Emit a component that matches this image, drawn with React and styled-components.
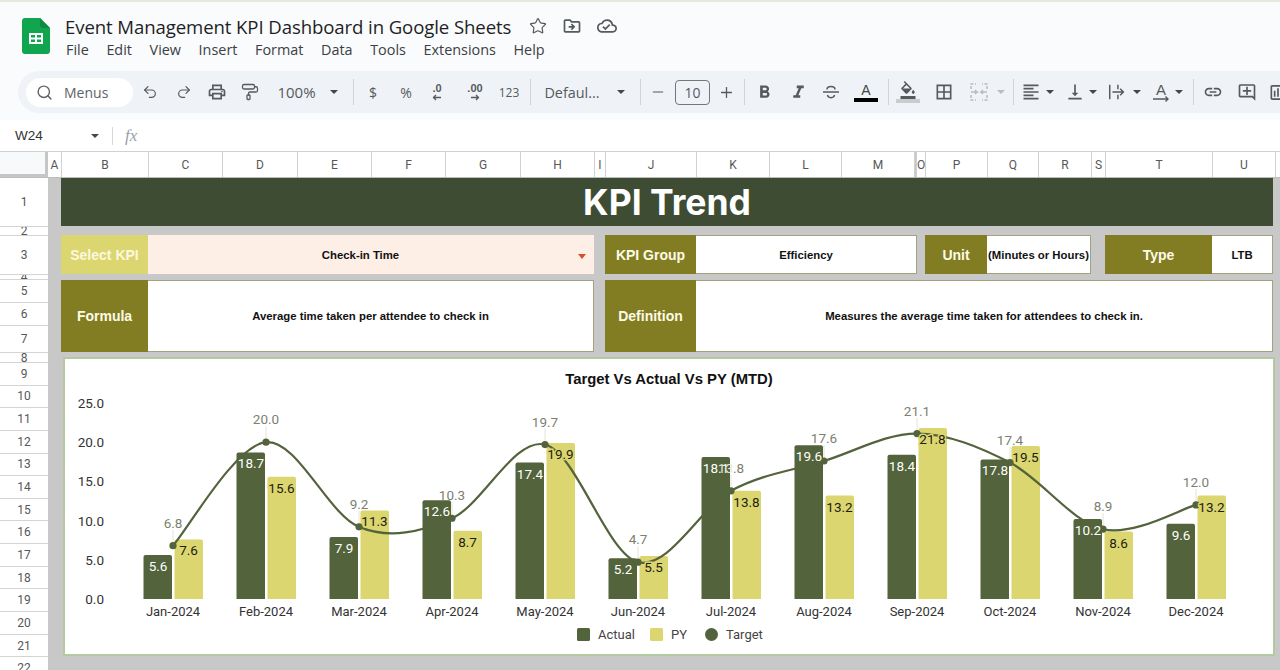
import React from 'react';
import styled, { createGlobalStyle } from 'styled-components';
import { Search, Undo2, Redo2, PaintRoller, Star, Minus, Plus } from 'lucide-react';
import {
  MdOutlineDriveFileMove,
  MdOutlineCloudDone,
  MdOutlineLocalPrintshop,
  MdOutlineAddComment,
  MdOutlineInsertChart,
  MdBorderAll,
  MdFormatAlignLeft,
  MdVerticalAlignBottom,
  MdFormatColorFill,
  MdFormatBold,
  MdFormatItalic,
  MdLink,
} from 'react-icons/md';

const MENU = ['File', 'Edit', 'View', 'Insert', 'Format', 'Data', 'Tools', 'Extensions', 'Help'];

const COLUMNS = [
  ['B', 87], ['C', 74], ['D', 75], ['E', 74], ['F', 74], ['G', 75], ['H', 74], ['I', 11],
  ['J', 91], ['K', 73], ['L', 72], ['M', 73], ['', 2], ['O', 9], ['P', 62], ['Q', 51],
  ['R', 53], ['S', 14], ['T', 107], ['U', 63],
];

const ROWS = [49, 9, 39, 5, 23, 23, 27, 10, ...Array(14).fill(22.65)];

const MONTHS = [
  { label: 'Jan-2024', actual: 5.6, py: 7.6, target: 6.8 },
  { label: 'Feb-2024', actual: 18.7, py: 15.6, target: 20.0 },
  { label: 'Mar-2024', actual: 7.9, py: 11.3, target: 9.2 },
  { label: 'Apr-2024', actual: 12.6, py: 8.7, target: 10.3 },
  { label: 'May-2024', actual: 17.4, py: 19.9, target: 19.7 },
  { label: 'Jun-2024', actual: 5.2, py: 5.5, target: 4.7 },
  { label: 'Jul-2024', actual: 18.1, py: 13.8, target: 13.8 },
  { label: 'Aug-2024', actual: 19.6, py: 13.2, target: 17.6 },
  { label: 'Sep-2024', actual: 18.4, py: 21.8, target: 21.1 },
  { label: 'Oct-2024', actual: 17.8, py: 19.5, target: 17.4 },
  { label: 'Nov-2024', actual: 10.2, py: 8.6, target: 8.9 },
  { label: 'Dec-2024', actual: 9.6, py: 13.2, target: 12.0 },
];

const DARK = '#53633b';
const LIGHT = '#dbd670';
const BASE_Y = 599;
const UNIT = 7.84;
const toY = (v) => BASE_Y - v * UNIT;
const toX = (i) => 173 + i * 93;

const GlobalStyle = createGlobalStyle`
  html, body {
    margin: 0;
    padding: 0;
    background: #fff;
    font-family: "Liberation Sans", Arial, sans-serif;
  }
`;

const Page = styled.div`
  width: 1280px;
  height: 670px;
  overflow: hidden;
  display: flex;
  flex-direction: column;
  border-top: 2px solid #e4e8de;
  box-sizing: border-box;
`;

const Header = styled.header`
  height: 118px;
  flex: none;
  background: #f9fbfd;
`;

const TitleRow = styled.div`
  height: 69px;
  display: flex;
  align-items: flex-start;
  padding-left: 22px;
`;

const LogoWrap = styled.div`
  margin-top: 16px;
  width: 28px;
  height: 36px;
`;

const TitleColumn = styled.div`
  margin-left: 15px;
  padding-top: 11px;
`;

const TitleLine = styled.div`
  display: flex;
  align-items: center;
  height: 26px;
`;

const DocTitle = styled.div`
  font-family: "Open Sans", sans-serif;
  font-size: 18.6px;
  color: #1f1f1f;
  letter-spacing: -0.1px;
  white-space: nowrap;
`;

const TitleIcons = styled.div`
  margin-left: 18px;
  display: flex;
  align-items: center;
  gap: 15px;
  color: #565a5c;
`;

const MenuBar = styled.nav`
  display: flex;
  gap: 17.6px;
  height: 20px;
  margin-left: 1px;
  align-items: center;
  font-family: "Open Sans", sans-serif;
  font-size: 14.4px;
  color: #3c4043;
`;

const Toolbar = styled.div`
  margin-left: 18px;
  height: 42px;
  display: flex;
  align-items: center;
  background: #eff3f8;
  border-radius: 21px 0 0 21px;
  padding-left: 8px;
  overflow: hidden;
  color: #565a5c;
`;

const MenuSearch = styled.div`
  width: 107px;
  height: 29px;
  flex: none;
  box-sizing: border-box;
  padding-left: 10px;
  display: flex;
  align-items: center;
  gap: 11px;
  background: #fff;
  border-radius: 15px;
  font-family: "Open Sans", sans-serif;
  font-size: 14px;
  color: #5f6368;
`;

const Slot = styled.div`
  width: ${(p) => p.$w}px;
  margin-left: ${(p) => p.$ml || 0}px;
  flex: none;
  display: flex;
  align-items: center;
  justify-content: center;
  font-family: ${(p) => (p.$sans ? '"Open Sans", sans-serif' : 'inherit')};
  font-size: ${(p) => p.$fs || 14}px;
  color: #565a5c;
  white-space: nowrap;
`;

const Caret = styled.div`
  width: 0;
  height: 0;
  flex: none;
  margin-left: ${(p) => p.$ml || 0}px;
  border-left: 4px solid transparent;
  border-right: 4px solid transparent;
  border-top: 4px solid ${(p) => p.$color || '#444746'};
`;

const Divider = styled.div`
  width: 1px;
  height: 26px;
  flex: none;
  margin-left: ${(p) => p.$ml || 0}px;
  background: #cfd3d8;
`;

const SizeBox = styled.div`
  width: 35px;
  height: 25px;
  flex: none;
  box-sizing: border-box;
  display: flex;
  align-items: center;
  justify-content: center;
  border: 1px solid #747775;
  border-radius: 4px;
  font-family: "Open Sans", sans-serif;
  font-size: 14px;
`;

const DecimalIcon = styled.div`
  display: flex;
  flex-direction: column;
  align-items: center;
  font-size: 11px;
  font-weight: 700;
  line-height: 11px;
  color: #565a5c;
`;

const ColorA = styled.div`
  width: 24px;
  display: flex;
  flex-direction: column;
  align-items: center;
  font-size: 14px;
  line-height: 15px;
  color: #444;
`;

const ColorBar = styled.div`
  width: 100%;
  height: ${(p) => p.$h || 4}px;
  background: ${(p) => p.$color};
`;

const FillIcon = styled.div`
  width: 24px;
  display: flex;
  flex-direction: column;
  align-items: center;
`;

const FormulaBar = styled.div`
  height: 32px;
  flex: none;
  display: flex;
  align-items: center;
  background: #fff;
  border-bottom: 1px solid #d0d0d0;
  box-sizing: border-box;
`;

const CellRef = styled.div`
  width: 76px;
  padding-left: 15px;
  font-size: 13.5px;
  color: #333;
`;

const FxDivider = styled.div`
  width: 1px;
  height: 18px;
  margin-left: 13px;
  background: #d8d8d8;
`;

const FxLabel = styled.div`
  margin-left: 12px;
  font-family: "Liberation Serif", serif;
  font-style: italic;
  font-size: 17px;
  color: #9aa0a6;
`;

const ColumnHeader = styled.div`
  height: 26px;
  flex: none;
  display: flex;
  background: #fff;
  border-bottom: 1px solid #bdbdbd;
  box-sizing: border-box;
`;

const CornerCell = styled.div`
  width: 45px;
  flex: none;
  background: #f8f9fa;
  border-right: 3px solid #c4c7c5;
  border-bottom: 3px solid #c4c7c5;
  box-sizing: content-box;
  height: 22px;
`;

const ColumnCell = styled.div`
  width: ${(p) => p.$w}px;
  flex: none;
  box-sizing: border-box;
  display: flex;
  align-items: center;
  justify-content: center;
  border-right: 1px solid #d0d0d0;
  font-family: Roboto, sans-serif;
  font-size: 12px;
  color: #575757;
  overflow: hidden;
  background: ${(p) => (p.$hidden ? '#c8c8c8' : '#fff')};
`;

const Body = styled.div`
  flex: 1;
  display: flex;
  min-height: 0;
`;

const RowHeader = styled.div`
  width: 48px;
  flex: none;
  background: #fff;
  display: flex;
  flex-direction: column;
`;

const RowCell = styled.div`
  height: ${(p) => p.$h}px;
  flex: none;
  box-sizing: border-box;
  display: flex;
  align-items: center;
  justify-content: center;
  overflow: hidden;
  border-bottom: 1px solid #d4d4d4;
  font-family: Roboto, sans-serif;
  font-size: 12px;
  color: #575757;
`;

const Sheet = styled.div`
  flex: 1;
  background: #c8c8c8;
  padding-left: 13px;
  display: grid;
  grid-template-columns: 87px 446px 11px 91px 221px 8px 62px 104px 14px 107px 61px;
  grid-template-rows: 48px 9px 39px 6px 72px 5px 299px;
  align-content: start;
  justify-content: start;
`;

const Banner = styled.div`
  grid-column: 1 / -1;
  grid-row: 1;
  display: flex;
  align-items: center;
  justify-content: center;
  background: #3d4c33;
  color: #fff;
  font-family: Inter, sans-serif;
  font-weight: 700;
  font-size: 35.5px;
`;

const LabelCell = styled.div`
  grid-column: ${(p) => p.$col};
  grid-row: ${(p) => p.$row};
  display: flex;
  align-items: center;
  justify-content: center;
  background: ${(p) => (p.$light ? LIGHT : '#827d23')};
  color: ${(p) => (p.$light ? '#fbf8df' : '#fdfbe6')};
  font-size: 14px;
  font-weight: 700;
`;

const ValueCell = styled.div`
  grid-column: ${(p) => p.$col};
  grid-row: ${(p) => p.$row};
  position: relative;
  display: flex;
  align-items: center;
  justify-content: center;
  box-sizing: border-box;
  padding-right: ${(p) => p.$pr || 0}px;
  background: ${(p) => p.$bg || '#fff'};
  border: 1px solid ${(p) => p.$bg || '#a3a27c'};
  border-left: none;
  color: #111;
  font-size: 11.35px;
  font-weight: 700;
  white-space: nowrap;
`;

const DropCaret = styled.div`
  position: absolute;
  right: 7px;
  top: 18px;
  width: 0;
  height: 0;
  border-left: 4px solid transparent;
  border-right: 4px solid transparent;
  border-top: 5px solid #d4502a;
`;

const ChartCard = styled.div`
  grid-column: 1 / -1;
  grid-row: 7;
  margin: 0 -2px 0 2px;
  background: #fff;
  border: 2px solid #b5c9a0;
  box-sizing: border-box;
  overflow: hidden;
`;

const ChartSvg = styled.svg`
  display: block;
  width: 100%;
  height: 100%;
  font-family: Roboto, sans-serif;
`;

const SheetsLogo = () => (
  <svg width="28" height="36" viewBox="0 0 28 36">
    <path d="M3 0h15l10 10v23a3 3 0 0 1-3 3H3a3 3 0 0 1-3-3V3a3 3 0 0 1 3-3z" fill="#11a54f" />
    <path d="M18 0l10 10h-7a3 3 0 0 1-3-3z" fill="#0c8a41" />
    <path d="M7 15h14v11H7z M9 17v2.5h4V17z M15 17v2.5h4V17z M9 21.5V24h4v-2.5z M15 21.5V24h4v-2.5z" fill="#fff" fillRule="evenodd" />
  </svg>
);

const StrikeIcon = () => (
  <svg width="20" height="20" viewBox="0 0 20 20" fill="none" stroke="#565a5c" strokeWidth="1.5">
    <path d="M2 10h16" />
    <path d="M6 7.5C6 3.5 14 3.5 14 7.5" />
    <path d="M6.5 13c.5 3.5 6.5 3.5 7 0" />
  </svg>
);

const MergeIcon = () => (
  <svg width="22" height="22" viewBox="0 0 22 22" fill="none" stroke="#b9bcbf" strokeWidth="1.5">
    <path d="M3 8V3h5M19 8V3h-5M3 14v5h5M19 14v5h-5" strokeDasharray="3 1.5" />
    <path d="M3 11h6l-2-2M9 11l-2 2M19 11h-6l2-2M13 11l2 2" />
  </svg>
);

const WrapIcon = () => (
  <svg width="22" height="20" viewBox="0 0 22 20" fill="none" stroke="#565a5c" strokeWidth="1.6">
    <path d="M3 2v16" />
    <path d="M12 2v5M12 13v5" />
    <path d="M6 10h12M14.5 6.5L18 10l-3.5 3.5" />
  </svg>
);

const RotateIcon = () => (
  <svg width="20" height="22" viewBox="0 0 20 22" fill="#565a5c">
    <text x="10" y="14" fontSize="15" textAnchor="middle" fontFamily="Liberation Sans, sans-serif">A</text>
    <path d="M2 18h15M14.5 15.5L17 18l-2.5 2.5" fill="none" stroke="#565a5c" strokeWidth="1.4" />
  </svg>
);

const SmallArrow = ({ left }) => (
  <svg width="10" height="7" viewBox="0 0 10 7" fill="none" stroke="#565a5c" strokeWidth="1.3">
    {left ? <path d="M9 3.5H1.5M4 1L1.5 3.5 4 6" /> : <path d="M1 3.5h7.5M6 1l2.5 2.5L6 6" />}
  </svg>
);

// catmull-rom through the target points, written out as cubic beziers
const buildCurve = (points) => {
  let d = `M${points[0][0]} ${points[0][1]}`;
  for (let i = 0; i < points.length - 1; i += 1) {
    const p0 = points[i - 1] || points[i];
    const p1 = points[i];
    const p2 = points[i + 1];
    const p3 = points[i + 2] || p2;
    const c1 = [p1[0] + (p2[0] - p0[0]) / 6, p1[1] + (p2[1] - p0[1]) / 6];
    const c2 = [p2[0] - (p3[0] - p1[0]) / 6, p2[1] - (p3[1] - p1[1]) / 6];
    d += `C${c1[0]} ${c1[1]} ${c2[0]} ${c2[1]} ${p2[0]} ${p2[1]}`;
  }
  return d;
};

const Bar = ({ x, value, fill }) => {
  const top = toY(value);
  return <path d={`M${x} ${BASE_Y}V${top + 2}q0-2 2-2h24.5q2 0 2 2V${BASE_Y}z`} fill={fill} />;
};

const Chart = () => {
  const points = MONTHS.map((m, i) => [toX(i), toY(m.target)]);
  return (
    <ChartSvg viewBox="65 359 1208 295">
      <text x="669" y="384" textAnchor="middle" fontFamily="Liberation Sans, sans-serif" fontWeight="700" fontSize="14.85" fill="#111">
        Target Vs Actual Vs PY (MTD)
      </text>

      {[0, 5, 10, 15, 20, 25].map((v) => (
        <text key={v} x="104" y={toY(v) + 5} textAnchor="end" fontSize="13.5" fill="#333">
          {v.toFixed(1)}
        </text>
      ))}

      {MONTHS.map((m, i) => (
        <g key={m.label}>
          <Bar x={toX(i) - 29.5} value={m.actual} fill={DARK} />
          <Bar x={toX(i) + 1.5} value={m.py} fill={LIGHT} />
          <text x={toX(i)} y="616" textAnchor="middle" fontSize="13" fill="#333">
            {m.label}
          </text>
        </g>
      ))}

      {points.map(([x, y]) => (
        <path key={x} d={`M${x} ${y - 16}V${y}`} stroke="#e2e2dc" strokeWidth="1" />
      ))}
      <path d={buildCurve(points)} fill="none" stroke={DARK} strokeWidth="2.2" />
      {points.map(([x, y]) => (
        <circle key={x} cx={x} cy={y} r="3.6" fill={DARK} />
      ))}

      {MONTHS.map((m, i) => (
        <g key={m.label} fontSize="13.5">
          <text x={toX(i) - 15} y={toY(m.actual) + 16} textAnchor="middle" fill="#fff">
            {m.actual.toFixed(1)}
          </text>
          <text
            x={toX(i) + 15.5}
            y={toY(m.py) + 16}
            textAnchor="middle"
            fill="#1d1d10"
            stroke={LIGHT}
            strokeWidth="3"
            style={{ paintOrder: 'stroke' }}
          >
            {m.py.toFixed(1)}
          </text>
          <text x={toX(i)} y={toY(m.target) - 18} textAnchor="middle" fill="#7d7f70">
            {m.label === 'Jul-2024' ? <tspan fill="#e4e7dc">13</tspan> : null}
            {m.label === 'Jul-2024' ? '.8' : m.target.toFixed(1)}
          </text>
        </g>
      ))}

      <rect x="577" y="628" width="13" height="13" rx="1.5" fill={DARK} />
      <text x="598" y="639" fontSize="13" fill="#444">Actual</text>
      <rect x="650" y="628" width="13" height="13" rx="1.5" fill={LIGHT} />
      <text x="671" y="639" fontSize="13" fill="#444">PY</text>
      <circle cx="711.5" cy="634.5" r="6.5" fill={DARK} />
      <text x="726" y="639" fontSize="13" fill="#444">Target</text>
    </ChartSvg>
  );
};

const App = () => (
  <Page>
    <GlobalStyle />
    <Header>
      <TitleRow>
        <LogoWrap>
          <SheetsLogo />
        </LogoWrap>
        <TitleColumn>
          <TitleLine>
            <DocTitle>Event Management KPI Dashboard in Google Sheets</DocTitle>
            <TitleIcons>
              <Star size={18} strokeWidth={1.6} />
              <MdOutlineDriveFileMove size={20} />
              <MdOutlineCloudDone size={20} />
            </TitleIcons>
          </TitleLine>
          <MenuBar>
            {MENU.map((item) => (
              <span key={item}>{item}</span>
            ))}
          </MenuBar>
        </TitleColumn>
      </TitleRow>
      <Toolbar>
        <MenuSearch>
          <Search size={17} strokeWidth={2} />
          Menus
        </MenuSearch>
        <Slot $w={34}><Undo2 size={16} strokeWidth={1.8} /></Slot>
        <Slot $w={33}><Redo2 size={16} strokeWidth={1.8} /></Slot>
        <Slot $w={34}><MdOutlineLocalPrintshop size={20} /></Slot>
        <Slot $w={32}><PaintRoller size={18} strokeWidth={1.7} /></Slot>
        <Slot $w={61} $sans $fs={15}>100%</Slot>
        <Slot $w={14}><Caret /></Slot>
        <Divider $ml={12} />
        <Slot $w={38} $fs={14} $sans>$</Slot>
        <Slot $w={28} $fs={14} $sans>%</Slot>
        <Slot $w={34}>
          <DecimalIcon>.0<SmallArrow left /></DecimalIcon>
        </Slot>
        <Slot $w={42}>
          <DecimalIcon>.00<SmallArrow /></DecimalIcon>
        </Slot>
        <Slot $w={26} $fs={12} $sans>123</Slot>
        <Divider $ml={8} />
        <Slot $w={82} $fs={14.4} $sans>Defaul...</Slot>
        <Slot $w={16}><Caret /></Slot>
        <Divider $ml={11} />
        <Slot $w={34}><Minus size={16} strokeWidth={1.8} /></Slot>
        <SizeBox>10</SizeBox>
        <Slot $w={32}><Plus size={17} strokeWidth={1.8} /></Slot>
        <Divider $ml={2} />
        <Slot $w={38}><MdFormatBold size={21} /></Slot>
        <Slot $w={30}><MdFormatItalic size={21} /></Slot>
        <Slot $w={36}><StrikeIcon /></Slot>
        <Slot $w={34}>
          <ColorA>A<ColorBar $color="#000" /></ColorA>
        </Slot>
        <Divider $ml={5} />
        <Slot $w={38}>
          <FillIcon>
            <MdFormatColorFill size={18} />
            <ColorBar $color="#c9cbcd" />
          </FillIcon>
        </Slot>
        <Slot $w={34}><MdBorderAll size={20} /></Slot>
        <Slot $w={36}><MergeIcon /></Slot>
        <Caret $color="#b9bcbf" />
        <Divider $ml={8} />
        <Slot $w={20} $ml={7}><MdFormatAlignLeft size={22} /></Slot>
        <Caret $ml={5} />
        <Slot $w={20} $ml={11}><MdVerticalAlignBottom size={22} /></Slot>
        <Caret $ml={4} />
        <Slot $w={20} $ml={10}><WrapIcon /></Slot>
        <Caret $ml={6} />
        <Slot $w={20} $ml={10}><RotateIcon /></Slot>
        <Caret $ml={4} />
        <Divider $ml={10} />
        <Slot $w={20} $ml={9}><MdLink size={22} /></Slot>
        <Slot $w={20} $ml={14}><MdOutlineAddComment size={21} /></Slot>
        <Slot $w={20} $ml={11}><MdOutlineInsertChart size={21} /></Slot>
      </Toolbar>
    </Header>

    <FormulaBar>
      <CellRef>W24</CellRef>
      <Caret />
      <FxDivider />
      <FxLabel>fx</FxLabel>
    </FormulaBar>

    <ColumnHeader>
      <CornerCell />
      <ColumnCell $w={14}>A</ColumnCell>
      {COLUMNS.map(([name, w]) => (
        <ColumnCell key={name || 'hidden'} $w={w} $hidden={!name}>{name}</ColumnCell>
      ))}
    </ColumnHeader>

    <Body>
      <RowHeader>
        {ROWS.map((h, i) => (
          <RowCell key={i} $h={h}>{i + 1}</RowCell>
        ))}
      </RowHeader>
      <Sheet>
        <Banner>KPI Trend</Banner>

        <LabelCell $col="1" $row="3" $light>Select KPI</LabelCell>
        <ValueCell $col="2" $row="3" $bg="#fdefe6" $pr={20}>
          Check-in Time
          <DropCaret />
        </ValueCell>
        <LabelCell $col="4" $row="3">KPI Group</LabelCell>
        <ValueCell $col="5" $row="3">Efficiency</ValueCell>
        <LabelCell $col="7" $row="3">Unit</LabelCell>
        <ValueCell $col="8" $row="3">(Minutes or Hours)</ValueCell>
        <LabelCell $col="10" $row="3">Type</LabelCell>
        <ValueCell $col="11" $row="3">LTB</ValueCell>

        <LabelCell $col="1" $row="5">Formula</LabelCell>
        <ValueCell $col="2" $row="5">Average time taken per attendee to check in</ValueCell>
        <LabelCell $col="4" $row="5">Definition</LabelCell>
        <ValueCell $col="5 / 12" $row="5">Measures the average time taken for attendees to check in.</ValueCell>

        <ChartCard>
          <Chart />
        </ChartCard>
      </Sheet>
    </Body>
  </Page>
);

export default App;
